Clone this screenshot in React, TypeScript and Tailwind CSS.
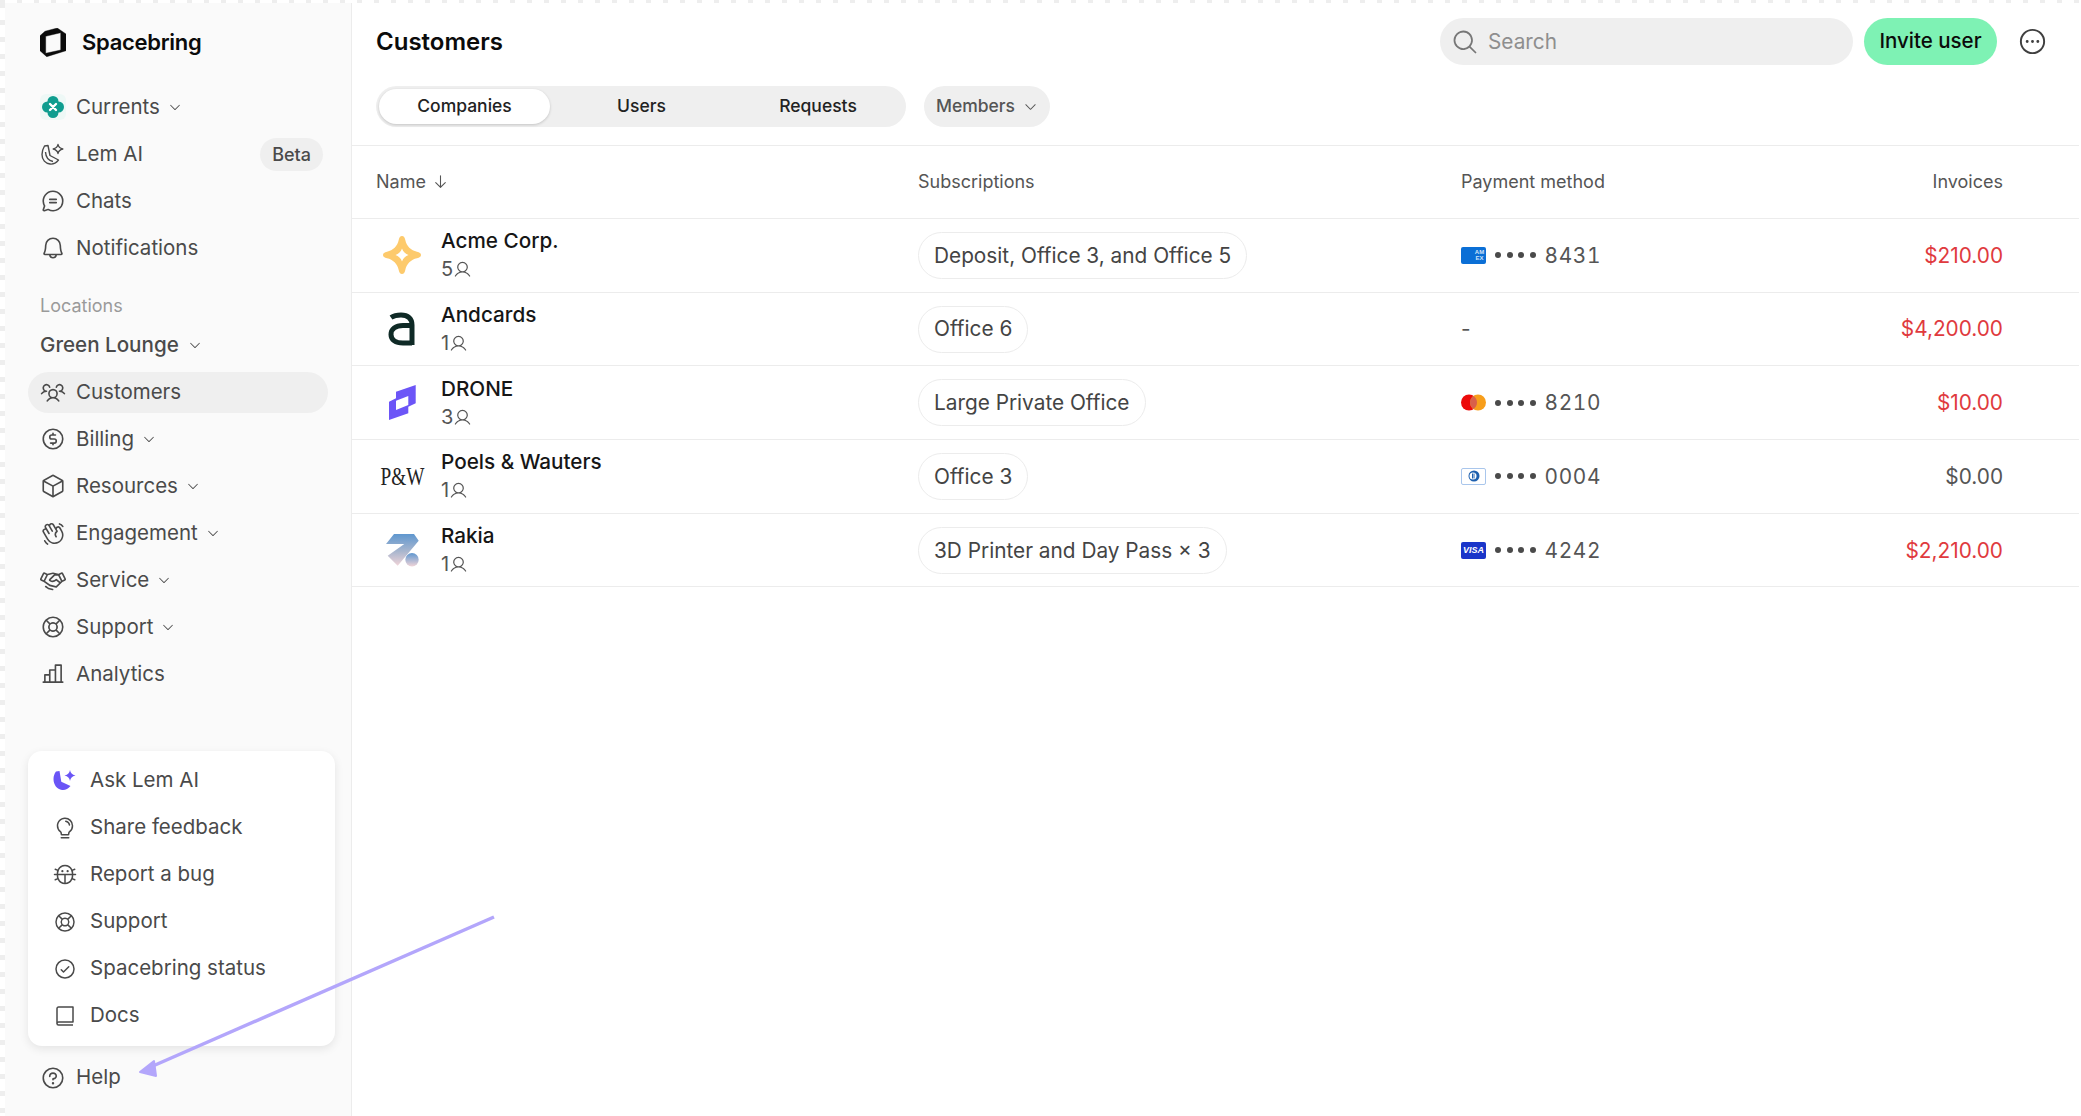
import type { ReactNode } from 'react';
import {
  PiArrowDown,
  PiBell,
  PiBug,
  PiCaretDown,
  PiChartBar,
  PiChatCircleText,
  PiCheckCircle,
  PiCube,
  PiCurrencyCircleDollar,
  PiDotsThreeCircle,
  PiHandshake,
  PiHandWaving,
  PiLifebuoy,
  PiLightbulb,
  PiMagnifyingGlass,
  PiQuestion,
  PiUser,
  PiUsersThree,
} from 'react-icons/pi';

const SpacebringLogo = () => (
  <svg width="26" height="29" viewBox="0 0 26 29">
    <path
      fillRule="evenodd"
      d="M5 3.300 17.300 0 26 6v16.700l-19.300 6L0 22.700V7.700zM5.700 8.300V25.300L20.700 22V4.700z"
      fill="#0b0b0b"
      stroke="#0b0b0b"
      strokeWidth="0.4"
      strokeLinejoin="round"
    />
  </svg>
);

const CurrentsIcon = () => (
  <div className="flex h-[26px] w-[26px] items-center justify-center rounded-md bg-[#eef8f6]">
    <svg width="22" height="22" viewBox="0 0 22 22">
      <circle cx="11" cy="5.500" r="5.500" fill="#0f9d8f" />
      <circle cx="11" cy="16.500" r="5.500" fill="#0f9d8f" />
      <circle cx="5.500" cy="11" r="5.500" fill="#0f9d8f" />
      <circle cx="16.500" cy="11" r="5.500" fill="#0f9d8f" />
      <path d="m8 8 6 6M14 8l-6 6" stroke="#fff" strokeWidth="2.400" strokeLinecap="round" />
    </svg>
  </div>
);

const LemIcon = () => (
  <svg width="24" height="23" viewBox="0 0 24 23" fill="none" stroke="#4a4a4a" strokeWidth="1.400" strokeLinejoin="round">
    <path d="M3.500 3 7 2.500l2 10 8.500 4.500c-2.500 3-5.500 4.500-8.500 4-4.500-.5-8-4-8-9.500 0-3 1-6 2.500-8.500Z" />
    <path d="M4.500 9c.3 5 2.500 8.500 7.500 9.500" />
    <path d="M17 1.500c.4 2.300 1.800 3.700 4.800 4.500-3 .8-4.400 2.200-4.800 4.500-.4-2.300-1.800-3.700-4.800-4.500 3-.8 4.400-2.200 4.800-4.500Z" />
  </svg>
);

const AskLemIcon = () => (
  <svg width="24" height="22" viewBox="0 0 24 22">
    <path d="M3 1.500 6.500 1l1.800 10.700 9.200 4.300c-2.500 3-5.500 4.500-8.500 4C4 19 .5 15 .5 9 .5 6 1.500 3.500 3 1.500Z" fill="#6a55f6" />
    <path d="M17 0c.5 3 2 4.500 5.500 5.500-3.500 1-5 2.500-5.500 5.500-.5-3-2-4.500-5.500-5.500C15 4.500 16.500 3 17 0Z" fill="#6a55f6" />
  </svg>
);

const BookIcon = () => (
  <svg width="24" height="24" viewBox="0 0 24 24" fill="none" stroke="#4a4a4a" strokeWidth="1.500" strokeLinejoin="round">
    <path d="M4 20V4.500A1.500 1.500 0 0 1 5.500 3H20v15H5.500A1.500 1.500 0 0 0 4 19.500 1.500 1.500 0 0 0 5.500 21H20" />
  </svg>
);

const AcmeLogo = () => (
  <svg width="40" height="40" viewBox="0 0 40 40">
    <path
      fillRule="evenodd"
      d="M20 1c1.800 0 2.700 1.500 3.300 4 1.200 6 5.700 10.500 11.700 11.700 2.500.6 4 1.500 4 3.300s-1.500 2.700-4 3.300C29 24.500 24.500 29 23.300 35c-.6 2.500-1.500 4-3.300 4s-2.700-1.500-3.300-4C15.500 29 11 24.500 5 23.300 2.500 22.700 1 21.800 1 20s1.500-2.700 4-3.300C11 15.500 15.500 11 16.700 5c.6-2.500 1.500-4 3.300-4Zm0 12.500c-1 3-3.500 5.500-6.500 6.500 3 1 5.500 3.500 6.500 6.500 1-3 3.500-5.500 6.500-6.500-3-1-5.500-3.500-6.500-6.500Z"
      fill="#fdca6c"
    />
  </svg>
);

const AndcardsLogo = () => (
  <svg width="28" height="34" viewBox="0 0 28 34" fill="none">
    <path d="M3 5.500C6 3.500 9 3 13 3c7 0 11 3.500 11 10v20" stroke="#0f2a26" strokeWidth="5" />
    <path d="M24 13.500H15C7.500 13.500 3 17 3 22.500S7.500 31 15 31h9" stroke="#0f2a26" strokeWidth="5" />
  </svg>
);

const DroneLogo = () => (
  <svg width="27" height="35" viewBox="0 0 27 35">
    <path
      fillRule="evenodd"
      d="M26.700 0 7 6.700v6.600L0 16.700V35l19.300-6.700v-6.600l7.400-3.400zM7 15.700 19.300 11v9L7 25z"
      fill="#6c55f7"
    />
  </svg>
);

const RakiaLogo = () => (
  <svg width="33" height="33" viewBox="0 0 33 33">
    <defs>
      <linearGradient id="rakia" x1="0" y1="0" x2="0" y2="1">
        <stop offset="0" stopColor="#5f97cf" />
        <stop offset="0.55" stopColor="#a9b6ce" />
        <stop offset="1" stopColor="#f0d4d8" />
      </linearGradient>
      <linearGradient id="rakiaDot" x1="0" y1="0" x2="0" y2="1">
        <stop offset="0" stopColor="#5f97cf" />
        <stop offset="1" stopColor="#f0d4d8" />
      </linearGradient>
    </defs>
    <path d="M8 0h20l4.700 6.700-21 25-10-10L18.300 10H0z" fill="url(#rakia)" />
    <circle cx="26" cy="25.700" r="6.700" fill="url(#rakiaDot)" />
  </svg>
);

const AmexIcon = () => (
  <div className="flex h-[17px] w-[25px] items-center justify-end rounded-[2px] bg-[#0b6fd6]">
    <span className="mr-[1px] w-[11px] text-center font-['Liberation_Sans',sans-serif] text-[6px] leading-[6px] font-bold text-[#cfe3f8]">
      AM EX
    </span>
  </div>
);

const MastercardIcon = () => (
  <svg width="25" height="17" viewBox="0 0 25 17">
    <circle cx="8" cy="8.500" r="8" fill="#ec0a0a" />
    <circle cx="17" cy="8.500" r="8" fill="#f79e1b" />
    <path d="M12.500 1.900a8 8 0 0 1 0 13.200 8 8 0 0 1 0-13.200Z" fill="#d9604a" />
  </svg>
);

const DinersIcon = () => (
  <div className="flex h-[17px] w-[25px] items-center justify-center rounded-[2px] border border-[#a9c6ec] bg-white">
    <svg width="12" height="12" viewBox="0 0 12 12">
      <circle cx="6" cy="6" r="5.500" fill="#1d5fae" />
      <circle cx="5" cy="6" r="3.500" fill="#fff" />
      <path d="M4.500 3.500v5M6 3.500v5" stroke="#1d5fae" strokeWidth="1" />
    </svg>
  </div>
);

const VisaIcon = () => (
  <div className="flex h-[17px] w-[25px] items-center justify-center rounded-[2px] bg-[#1a35c9]">
    <span className="font-['Liberation_Sans',sans-serif] text-[9px] leading-none font-bold text-white italic">VISA</span>
  </div>
);

function NavRow({
  icon,
  label,
  caret,
  active,
  badge,
}: {
  icon: ReactNode;
  label: string;
  caret?: boolean;
  active?: boolean;
  badge?: string;
}) {
  return (
    <div className="flex h-[47px] items-center">
      <div className={`flex h-[41px] w-full items-center rounded-full px-[12px] ${active ? 'bg-[#efefef]' : ''}`}>
        <div className="flex w-[26px] shrink-0 items-center justify-center text-[#4a4a4a]">{icon}</div>
        <span className="ml-[10px] text-[20.500px] text-[#4a4a4a]">{label}</span>
        {caret && <PiCaretDown className="ml-[8px] text-[#4a4a4a]" size={14} />}
        {badge && (
          <span className="mr-[-7px] ml-auto rounded-full bg-[#efefef] px-[12px] py-[5px] text-[18px] leading-[23px] font-medium text-[#4a4a4a]">
            {badge}
          </span>
        )}
      </div>
    </div>
  );
}

function HelpRow({ icon, label }: { icon: ReactNode; label: string }) {
  return (
    <div className="flex h-[47px] items-center pl-[25px]">
      <div className="flex w-[24px] shrink-0 items-center justify-center text-[#4a4a4a]">{icon}</div>
      <span className="ml-[13px] text-[20.500px] text-[#4a4a4a]">{label}</span>
    </div>
  );
}

const customers = [
  { name: 'Acme Corp.', count: 5, logo: <AcmeLogo />, plan: 'Deposit, Office 3, and Office 5', card: <AmexIcon />, last4: '8431', due: '$210.00', late: true },
  { name: 'Andcards', count: 1, logo: <AndcardsLogo />, plan: 'Office 6', card: null, last4: '', due: '$4,200.00', late: true },
  { name: 'DRONE', count: 3, logo: <DroneLogo />, plan: 'Large Private Office', card: <MastercardIcon />, last4: '8210', due: '$10.00', late: true },
  {
    name: 'Poels & Wauters',
    count: 1,
    logo: <span className="inline-block scale-x-[0.77] font-['Liberation_Serif',serif] text-[25px] text-[#222]">P&amp;W</span>,
    plan: 'Office 3',
    card: <DinersIcon />,
    last4: '0004',
    due: '$0.00',
    late: false,
  },
  { name: 'Rakia', count: 1, logo: <RakiaLogo />, plan: '3D Printer and Day Pass × 3', card: <VisaIcon />, last4: '4242', due: '$2,210.00', late: true },
];

export default function App() {
  return (
    <div className="relative h-[1116px] w-[2081px] overflow-hidden bg-white font-['Inter',sans-serif]">
      {/* dashed capture edge */}
      <div className="h-[3px] bg-[repeating-linear-gradient(90deg,#eeeeee_0_5px,transparent_5px_17px)]" />
      <div className="flex h-[1113px]">
        <div className="w-[5px] bg-[repeating-linear-gradient(180deg,#eeeeee_0_5px,transparent_5px_17px)]" />

        {/* Sidebar */}
        <aside className="flex w-[347px] shrink-0 flex-col border-r border-[#ececec] bg-[#fafafa] pl-[23px]">
          <div className="mt-[16px] flex h-[46px] items-center pl-[12px]">
            <SpacebringLogo />
            <span className="ml-[16px] text-[22px] font-semibold tracking-[-0.3px] text-[#0b0b0b]">Spacebring</span>
          </div>
          <nav className="mt-[18.500px] w-[300px]">
            <NavRow icon={<CurrentsIcon />} label="Currents" caret />
            <NavRow icon={<LemIcon />} label="Lem AI" badge="Beta" />
            <NavRow icon={<PiChatCircleText size={26} />} label="Chats" />
            <NavRow icon={<PiBell size={26} />} label="Notifications" />
            <div className="mt-[22px] mb-[4px] h-[24px] pl-[12px] text-[18px] leading-[24px] text-[#9a9a9a]">Locations</div>
            <div className="flex h-[47px] items-center pl-[12px] text-[20.600px] font-medium text-[#4a4a4a]">
              Green Lounge
              <PiCaretDown className="ml-[9px]" size={14} />
            </div>
            <NavRow icon={<PiUsersThree size={28} />} label="Customers" active />
            <NavRow icon={<PiCurrencyCircleDollar size={26} />} label="Billing" caret />
            <NavRow icon={<PiCube size={26} />} label="Resources" caret />
            <NavRow icon={<PiHandWaving size={27} />} label="Engagement" caret />
            <NavRow icon={<PiHandshake size={29} />} label="Service" caret />
            <NavRow icon={<PiLifebuoy size={26} />} label="Support" caret />
            <NavRow icon={<PiChartBar size={26} />} label="Analytics" />
          </nav>

          <div className="mt-auto w-[307px] rounded-[14px] bg-white py-[6.500px] shadow-[0_3px_10px_rgba(0,0,0,0.09)]">
            <HelpRow icon={<AskLemIcon />} label="Ask Lem AI" />
            <HelpRow icon={<PiLightbulb size={26} />} label="Share feedback" />
            <HelpRow icon={<PiBug size={27} />} label="Report a bug" />
            <HelpRow icon={<PiLifebuoy size={26} />} label="Support" />
            <HelpRow icon={<PiCheckCircle size={26} />} label="Spacebring status" />
            <HelpRow icon={<BookIcon />} label="Docs" />
          </div>
          <div className="mt-[8.500px] mb-[15px] w-[300px]">
            <NavRow icon={<PiQuestion size={26} />} label="Help" />
          </div>
        </aside>

        {/* Main */}
        <main className="min-w-0 flex-1 pr-[2px]">
          <div className="px-[24px] pt-[15px] pb-[18px]">
            <div className="flex h-[47px] items-center">
              <h1 className="text-[24px] font-semibold text-[#0b0b0b]">Customers</h1>
              <div className="ml-auto flex h-[47px] w-[413px] items-center rounded-full bg-[#efefef] pl-[11px]">
                <PiMagnifyingGlass className="text-[#777]" size={28} />
                <span className="ml-[9px] text-[20.800px] text-[#8e8e8e]">Search</span>
              </div>
              <button className="ml-[11px] h-[47px] w-[133px] rounded-full bg-[#7ef2b4] text-[20.500px] font-medium text-[#0b0b0b]">
                Invite user
              </button>
              <PiDotsThreeCircle className="mr-[7px] ml-[20px] text-[#3f3f3f]" size={31} />
            </div>
            <div className="mt-[21px] flex h-[41px] items-center">
              <div className="flex h-[41px] w-[530px] items-center rounded-full bg-[#efefef] px-[3px] text-[17.500px] font-medium text-[#222]">
                <div className="flex h-[35px] w-[171px] items-center justify-center rounded-full bg-white shadow-[0_1px_3px_rgba(0,0,0,0.18)]">
                  Companies
                </div>
                <div className="flex w-[183px] justify-center">Users</div>
                <div className="flex w-[170px] justify-center">Requests</div>
              </div>
              <div className="ml-[18px] flex h-[41px] w-[126px] items-center justify-center rounded-full bg-[#efefef] text-[17.500px] font-medium text-[#555]">
                Members
                <PiCaretDown className="ml-[8px]" size={15} />
              </div>
            </div>
          </div>

          <div className="grid h-[74px] grid-cols-[542px_543px_1fr_auto] items-center border-y border-[#ececec] pr-[76px] pb-[2px] pl-[24px] text-[18px] text-[#555]">
            <div className="flex items-center gap-[6px]">
              Name
              <PiArrowDown size={17} />
            </div>
            <div>Subscriptions</div>
            <div>Payment method</div>
            <div>Invoices</div>
          </div>

          {customers.map((c) => (
            <div
              key={c.name}
              className="grid h-[73.700px] grid-cols-[542px_543px_1fr_auto] items-center border-b border-[#ececec] pr-[76px] pl-[24px]"
            >
              <div className="flex items-center">
                <div className="flex w-[52px] shrink-0 justify-center whitespace-nowrap">{c.logo}</div>
                <div className="ml-[13px]">
                  <div className="text-[20.700px] leading-[29px] font-medium text-[#161616]">{c.name}</div>
                  <div className="flex items-center text-[20px] leading-[29px] text-[#555]">
                    {c.count}
                    <PiUser size={19} />
                  </div>
                </div>
              </div>
              <div>
                <span className="inline-flex h-[47px] items-center rounded-full border border-[#ececec] px-[15px] text-[20.800px] text-[#444]">
                  {c.plan}
                </span>
              </div>
              <div className="flex items-center text-[20.800px] text-[#555]">
                {c.card ? (
                  <>
                    {c.card}
                    <div className="ml-[9px] flex gap-[5.500px]">
                      <span className="h-[6px] w-[6px] rounded-full bg-[#4a4a4a]" />
                      <span className="h-[6px] w-[6px] rounded-full bg-[#4a4a4a]" />
                      <span className="h-[6px] w-[6px] rounded-full bg-[#4a4a4a]" />
                      <span className="h-[6px] w-[6px] rounded-full bg-[#4a4a4a]" />
                    </div>
                    <span className="ml-[9px] tracking-[0.7px] tabular-nums">{c.last4}</span>
                  </>
                ) : (
                  '-'
                )}
              </div>
              <div className={`text-right text-[20.800px] ${c.late ? 'text-[#e03a3e]' : 'text-[#555]'}`}>{c.due}</div>
            </div>
          ))}
        </main>
      </div>

      {/* annotation arrow over the page */}
      <svg className="pointer-events-none absolute top-0 left-0" width="2081" height="1116" fill="none">
        <path d="M494 917 146 1069" stroke="#b3a6fb" strokeWidth="3.500" />
        <path d="M140 1072l14-11 2 15z" fill="#b3a6fb" stroke="#b3a6fb" strokeWidth="2" strokeLinejoin="round" />
      </svg>
    </div>
  );
}
